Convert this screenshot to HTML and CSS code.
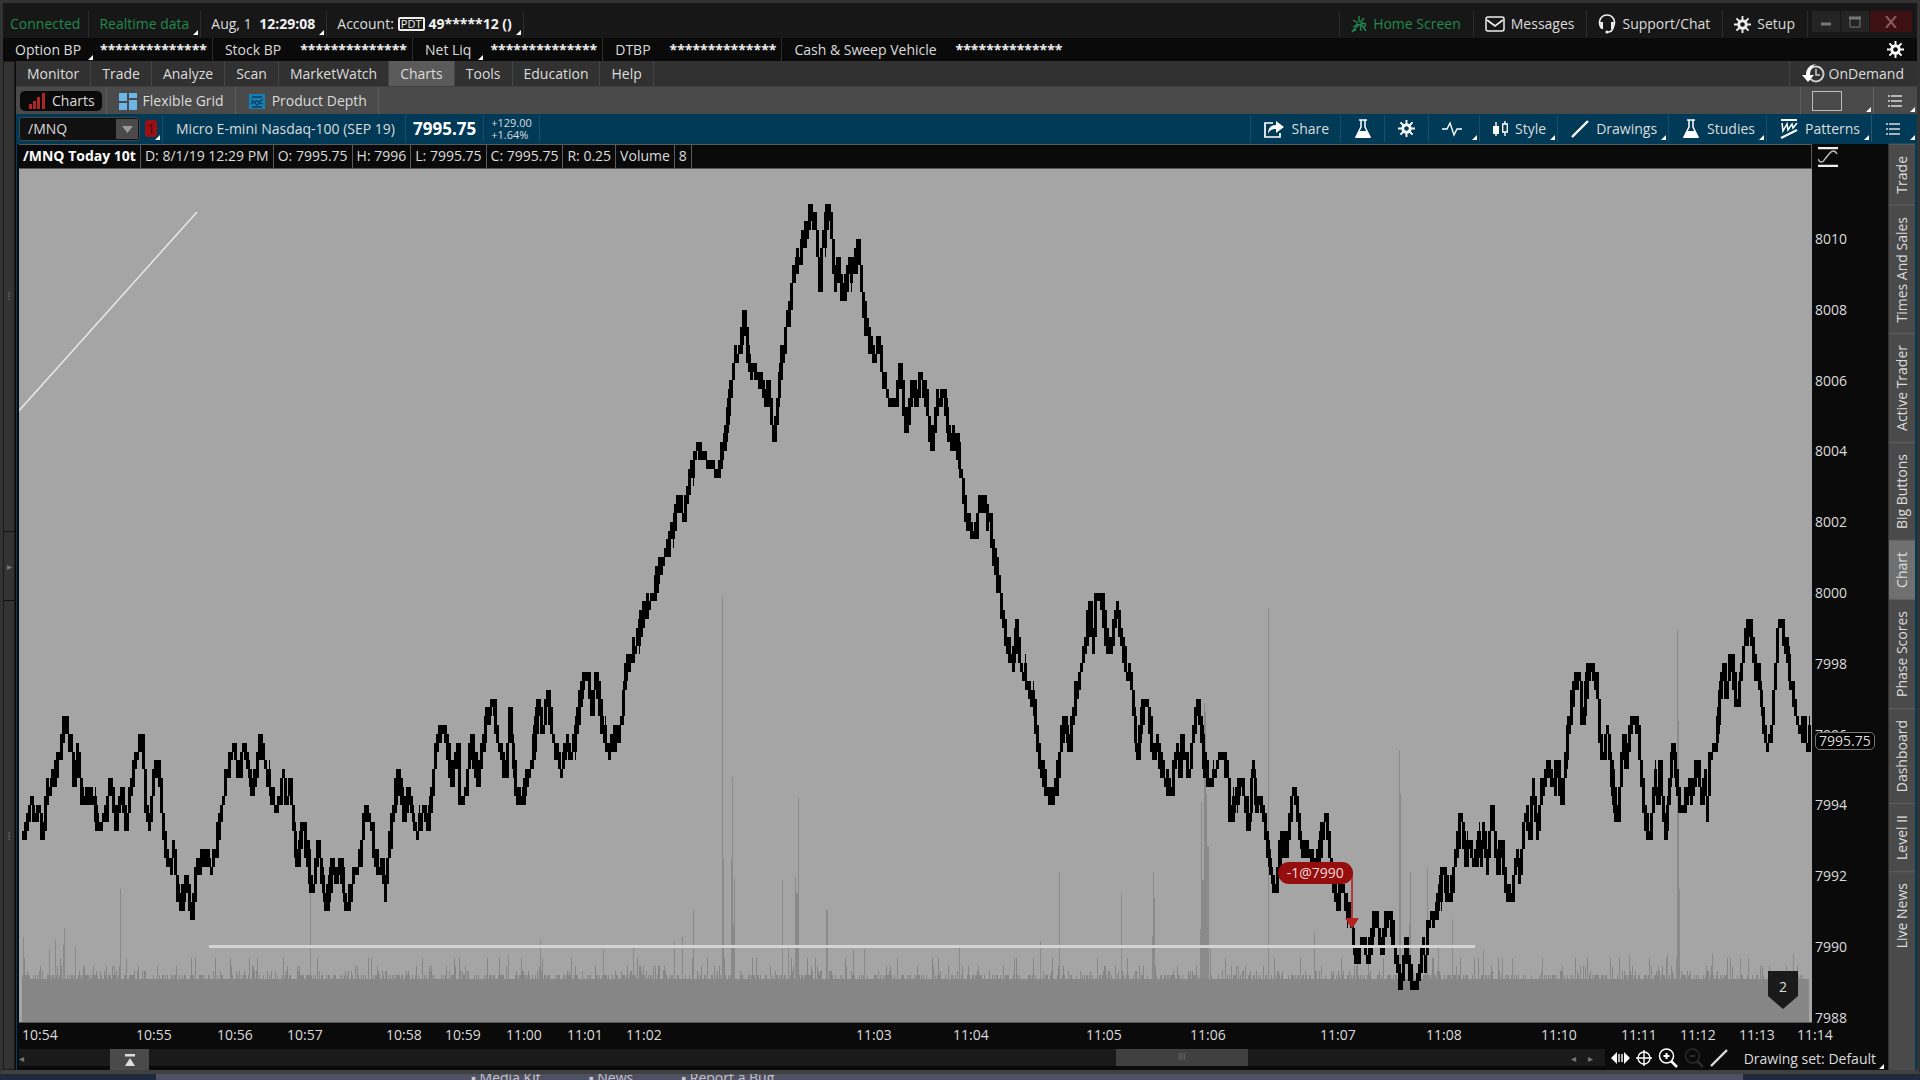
FILE: index.html
```
<!DOCTYPE html>
<html lang="en">
<head>
    <meta charset="UTF-8">
    <meta name="viewport" content="width=device-width, initial-scale=1.0">
    <title>Charts - /MNQ</title>
    <link rel="stylesheet" href="styles.css">
</head>
<body>
    <!-- shared icons -->
    <svg class="sprite" aria-hidden="true">
        <symbol id="gear" viewBox="0 0 18 18">
            <circle cx="9" cy="9" r="4" fill="none" stroke="currentColor" stroke-width="3"/>
            <path d="M9 0v4M9 14v4M0 9h4M14 9h4M2.6 2.6l3 3M12.4 12.4l3 3M2.6 15.4l3-3M12.4 5.6l3-3" stroke="currentColor" stroke-width="2"/>
        </symbol>
        <symbol id="flask" viewBox="0 0 18 20">
            <path d="M5 1h8M7 1v7L2 18h14L11 8V1" fill="none" stroke="currentColor" stroke-width="1.5"/>
            <path d="M5.5 12h7l4 7h-15z" fill="currentColor"/>
        </symbol>
        <symbol id="list" viewBox="0 0 16 14">
            <path d="M1 2h2M1 7h2M1 12h2M4 2h11M4 7h11M4 12h11" stroke="currentColor" stroke-width="1.4"/>
        </symbol>
        <symbol id="line" viewBox="0 0 18 18">
            <path d="M1 17L17 1" stroke="currentColor" stroke-width="2.4"/>
        </symbol>
    </svg>

    <div class="app">
        <header class="topbar">
            <span class="top-item green">Connected</span>
            <button class="top-item green corner">Realtime data</button>
            <button class="top-item corner">Aug, 1&nbsp; <b>12:29:08</b></button>
            <button class="top-item corner">Account: <span class="pdt">PDT</span> <b>49*****12 ()</b></button>
            <div class="spacer"></div>
            <button class="top-item right-item green">
                <svg width="16" height="18" viewBox="0 0 16 18"><path d="M8 1v6M13 3L9 8M2 5l5 3M8 9l-7 8M9 9l1 7M10 9l5 7M2 12l5-3M10 8l5 1M1 16l4-1M13 12l2-2" fill="none" stroke="currentColor" stroke-width="1.4"/></svg>
                Home Screen
            </button>
            <button class="top-item right-item">
                <svg width="20" height="16" viewBox="0 0 20 16"><rect x="1" y="1" width="18" height="14" rx="2" fill="none" stroke="currentColor" stroke-width="1.5"/><path d="M2 4l8 6 8-6" fill="none" stroke="currentColor" stroke-width="1.7"/></svg>
                Messages
            </button>
            <button class="top-item right-item">
                <svg width="18" height="20" viewBox="0 0 18 20"><path d="M3 14C-1 6 4 1 9 1s10 5 6 13q-1 4-5 4" fill="none" stroke="currentColor" stroke-width="1.6"/><path d="M2 8l3 0 0 7-2 0zM16 8l-3 0 0 7 2 0z" fill="currentColor"/><circle cx="9" cy="18" r="1.6" fill="currentColor"/></svg>
                Support/Chat
            </button>
            <button class="top-item right-item"><svg width="17" height="17"><use href="#gear"/></svg>Setup</button>
            <div class="window-buttons">
                <button aria-label="Minimize"><svg width="12" height="12"><path d="M1 8h10" stroke="#777" stroke-width="3"/></svg></button>
                <button aria-label="Maximize"><svg width="12" height="12"><path d="M1 2v9h10V2" fill="none" stroke="#777"/><path d="M0 2h12" stroke="#777" stroke-width="3"/></svg></button>
                <button class="close" aria-label="Close"><svg width="12" height="12"><path d="M1 0l10 12M11 0L1 12" stroke="#8a5a5a" stroke-width="2"/></svg></button>
            </div>
        </header>

        <div class="balances">
            <div class="balance"><span class="name corner">Option BP</span><b>**************</b></div>
            <div class="balance"><span class="name">Stock BP</span><b>**************</b></div>
            <div class="balance"><span class="name corner">Net Liq</span><b>**************</b></div>
            <div class="balance"><span class="name">DTBP</span><b>**************</b></div>
            <div class="balance"><span class="name">Cash &amp; Sweep Vehicle</span><b>**************</b></div>
            <div class="spacer"></div>
            <button class="balance-setup" aria-label="Balance settings"><svg width="17" height="17"><use href="#gear"/></svg></button>
        </div>

        <div class="workspace">
            <div class="gutter">
                <span class="grip">⁞</span>
                <button class="expand" aria-label="Expand sidebar">▸</button>
                <span class="grip">⁞</span>
            </div>
            <main class="main">
                <nav class="menu">
                    <a href="#">Monitor</a>
                    <a href="#">Trade</a>
                    <a href="#">Analyze</a>
                    <a href="#">Scan</a>
                    <a href="#">MarketWatch</a>
                    <a href="#" class="active">Charts</a>
                    <a href="#">Tools</a>
                    <a href="#">Education</a>
                    <a href="#">Help</a>
                    <div class="spacer"></div>
                    <button class="ondemand">
                        <svg width="24" height="20" viewBox="0 0 24 20"><circle cx="15" cy="10" r="7.5" fill="none" stroke="#ccc" stroke-width="2"/><path d="M15 5v6h4" fill="none" stroke="#ccc" stroke-width="1.5"/><path d="M15 0C8 1 5 5 5 11H1l6 7 6-7H9c0-5 2-9 6-11z" fill="#fff"/></svg>
                        OnDemand
                    </button>
                </nav>

                <div class="tabs">
                    <div class="tab"><button class="pill">
                        <svg width="17" height="17"><path d="M1.500 12v5M5.500 9v8M9.500 5v12M14.500 1v16" stroke="#b02525" stroke-width="3"/></svg>Charts
                    </button></div>
                    <button class="tab">
                        <svg width="18" height="18"><path d="M0 1h8v8H0zM10 1h8v5h-8zM0 11h8v7H0zM10 8h8v10h-8z" fill="#6cb5e8"/></svg>Flexible Grid
                    </button>
                    <button class="tab">
                        <svg width="18" height="18"><path d="M1 2h16v15H1z" fill="#1580b5"/><path d="M4 5h10M3 8l3 2 3-1 2 1 4-3M3 12l3-2 3 3 3-2 3 1M4 15h10" fill="none" stroke="#0d3d5c" stroke-width="1.3"/></svg>Product Depth
                    </button>
                    <div class="spacer"></div>
                    <button class="layout-btn corner" aria-label="Layout"><span></span></button>
                    <button class="list-btn corner" aria-label="Menu"><svg width="16" height="14"><use href="#list"/></svg></button>
                </div>

                <div class="symbolbar">
                    <div class="combo">
                        <input type="text" value="/MNQ" aria-label="Symbol">
                        <button aria-label="Show symbols"><svg width="11" height="7"><path d="M0 0h11L5.500 7z" fill="#999"/></svg></button>
                    </div>
                    <button class="link corner"><span>1</span></button>
                    <span class="sym-name">Micro E-mini Nasdaq-100 (SEP 19)</span>
                    <span class="last">7995.75</span>
                    <span class="change">+129.00<br>+1.64%</span>
                    <div class="spacer"></div>
                    <button class="tool">
                        <svg width="20" height="18" viewBox="0 0 20 18"><path d="M9 3H1v14h15v-4" fill="none" stroke="currentColor" stroke-width="1.7"/><path d="M12 1l8 6-8 6V9c-4 0-6 1-8 5 0-6 3-9 8-9z" fill="currentColor"/></svg>Share
                    </button>
                    <button class="tool icon-tool" aria-label="Strategy"><svg width="18" height="20"><use href="#flask"/></svg></button>
                    <button class="tool icon-tool" aria-label="Chart settings"><svg width="17" height="17"><use href="#gear"/></svg></button>
                    <button class="tool pulse-tool corner" aria-label="Events"><svg width="20" height="16" viewBox="0 0 20 16"><path d="M0 8h5l3-6 4 12 3-6h5" fill="none" stroke="currentColor" stroke-width="1.4"/></svg></button>
                    <button class="tool corner">
                        <svg width="15" height="18" viewBox="0 0 15 18"><path d="M3 2v14M12 1v3M12 12v4" stroke="currentColor" stroke-width="1.4"/><path d="M0 6h6v8H0z" fill="currentColor"/><path d="M9.700 4h4.600v8H9.700z" fill="none" stroke="currentColor" stroke-width="1.4"/></svg>Style
                    </button>
                    <button class="tool corner"><svg width="18" height="18"><use href="#line"/></svg>Drawings</button>
                    <button class="tool corner"><svg width="18" height="20"><use href="#flask"/></svg>Studies</button>
                    <button class="tool corner">
                        <svg width="18" height="20" viewBox="0 0 18 20"><path d="M1 1h16" stroke="currentColor" stroke-width="2"/><path d="M1 19L17 11" stroke="currentColor" stroke-width="2"/><path d="M2 4l1 8 4-7 1 6 4-6 1 4 4-5" fill="none" stroke="currentColor" stroke-width="1.5"/></svg>Patterns
                    </button>
                    <button class="list-btn corner" aria-label="Menu"><svg width="16" height="14"><use href="#list"/></svg></button>
                </div>

                <div class="content">
                    <section class="chart">
                        <div class="infobar">
                            <b>/MNQ Today 10t</b>
                            <span>D: 8/1/19 12:29 PM</span>
                            <span>O: 7995.75</span>
                            <span>H: 7996</span>
                            <span>L: 7995.75</span>
                            <span>C: 7995.75</span>
                            <span>R: 0.25</span>
                            <span>Volume</span>
                            <span>8</span>
                        </div>
                        <button class="scale-btn" aria-label="Scale">
                            <svg width="20" height="20" viewBox="0 0 20 20"><path d="M0 1h20M0 19h20" stroke="#eee" stroke-width="2.4"/><path d="M0 12c2 4 5 4 7 0l4-5c3-4 6-4 8 0" fill="none" stroke="#bbb" stroke-width="1.4"/></svg>
                        </button>
                        <div class="plot">
                            <svg class="plot-svg" viewBox="19 169 1793 854" preserveAspectRatio="none" shape-rendering="crispEdges">
                                <path id="volume" fill="#868686"/>
                                <path id="spikes" fill="#8a8a8a"/>
                                <path id="price"/>
                                <path d="M19 411L197 212" stroke="#e8e8e8" stroke-width="1.500" shape-rendering="auto"/>
                                <path d="M209 947.500H1475" stroke="#d4d4d4" stroke-width="3"/>
                                <path d="M1352 872v48" stroke="#b03a3a" stroke-width="2"/>
                                <path d="M1345 919h14l-7 11z" fill="#b52020" shape-rendering="auto"/>
                            </svg>
                            <span class="order">-1@7990</span>
                            <span class="event"><svg width="30" height="38"><path d="M0 0h30v25L15 38 0 25z" fill="#1a1a1a"/></svg><span>2</span></span>
                        </div>
                        <div class="price-axis" id="priceAxis"></div>
                        <div class="time-axis" id="timeAxis"></div>
                        <div class="bottombar">
                            <div class="scroll">
                                <span class="arrow">◂</span>
                                <span class="thumb">III</span>
                                <span class="arrow">◂</span>
                                <span class="arrow">▸</span>
                                <button class="drawer" aria-label="Show panel"><svg width="10" height="12"><path d="M0 1h10" stroke="#ddd" stroke-width="3"/><path d="M5 4l5 8H0z" fill="#ddd"/></svg></button>
                            </div>
                            <button aria-label="Fit width"><svg width="19" height="14" viewBox="0 0 19 14"><path d="M0 7l6-6v12zM19 7l-6-6v12z" fill="#fff"/><path d="M8 3v8M11 3v8" stroke="#fff" stroke-width="1.4"/></svg></button>
                            <button aria-label="Crosshair"><svg width="16" height="16" viewBox="0 0 16 16"><circle cx="8" cy="8" r="6" fill="none" stroke="#fff" stroke-width="1.4"/><path d="M8 0v16M0 8h16" stroke="#fff" stroke-width="1.4"/></svg></button>
                            <button aria-label="Zoom in"><svg width="20" height="20" viewBox="0 0 20 20"><circle cx="8.500" cy="8" r="7" fill="none" stroke="#fff" stroke-width="1.5"/><path d="M8.500 5v6M5.500 8h6" stroke="#fff" stroke-width="2"/><path d="M13 13l6 6" stroke="#fff" stroke-width="2.6"/></svg></button>
                            <button aria-label="Zoom out" disabled><svg width="20" height="20" viewBox="0 0 20 20"><circle cx="8.500" cy="8" r="7" fill="none" stroke="#2a2a2a" stroke-width="1.5"/><path d="M5.500 8h6" stroke="#2a2a2a" stroke-width="2"/><path d="M13 13l6 6" stroke="#2a2a2a" stroke-width="2.6"/></svg></button>
                            <button aria-label="Draw line"><svg width="18" height="18"><use href="#line"/></svg></button>
                            <button class="drawing-set corner">Drawing set: Default</button>
                        </div>
                    </section>

                    <aside class="side-tabs">
                        <button>Trade</button>
                        <button>Times And Sales</button>
                        <button>Active Trader</button>
                        <button>Big Buttons</button>
                        <button class="active">Chart</button>
                        <button>Phase Scores</button>
                        <button>Dashboard</button>
                        <button>Level II</button>
                        <button>Live News</button>
                    </aside>
                </div>
            </main>
        </div>
    </div>
    <footer class="desktop">
        <div class="behind"><span>▪ Media Kit</span><span>▪ News</span><span>▪ Report a Bug</span></div>
    </footer>

    <script src="chart.js"></script>
</body>
</html>
```

FILE: styles.css
```
* {
    box-sizing: border-box;
}
body {
    margin: 0;
    height: 100vh;
    display: flex;
    flex-direction: column;
    overflow: hidden;
    background: #0a0a0a;
    color: #dcdcdc;
    font-family: "Open Sans", "Noto Sans", sans-serif;
    font-size: 14px;
    line-height: 20px;
    white-space: nowrap;
}
button, input {
    font: inherit;
    color: inherit;
    background: none;
    border: none;
    padding: 0;
    margin: 0;
}
a {
    color: inherit;
    text-decoration: none;
}
svg {
    display: block;
    flex: none;
}
.sprite {
    position: absolute;
    width: 0;
    height: 0;
}
.spacer {
    flex: 1;
}
.green {
    color: #1f8a50;
}

/* small white triangle that marks a drop-down */
.corner {
    position: relative;
}
.corner::after {
    content: "";
    position: absolute;
    right: 2px;
    bottom: 2px;
    border-left: 5px solid transparent;
    border-bottom: 5px solid #fff;
}

.app {
    flex: 1;
    min-height: 0;
    display: flex;
    flex-direction: column;
    border: 3px solid #333;
    border-bottom: 4px solid #404040;
}

/* top bar */
.topbar {
    display: flex;
    height: 35px;
    padding: 8px 5px 1px 0;
    background: #171717;
}
.top-item {
    display: flex;
    align-items: center;
    gap: 4px;
    padding: 0 11px 0 10px;
    border-right: 1px solid #2c2c2c;
}
.top-item:first-child {
    padding: 0 8px 0 7px;
}
.top-item b {
    color: #f2f2f2;
}
.right-item {
    gap: 6px;
    padding: 0 12px 0 11px;
}
.right-item svg {
    color: #eee;
}
.right-item.green {
    border-left: 1px solid #2c2c2c;
}
.right-item.green svg {
    color: #1f8a50;
}
.pdt {
    border: 2px solid #eee;
    border-radius: 2px;
    padding: 0 1px;
    font-size: 11px;
    line-height: 10px;
    color: #eee;
}
.window-buttons {
    display: flex;
    gap: 1px;
    height: 21px;
    margin-left: 4px;
}
.window-buttons button {
    width: 28px;
    display: grid;
    place-items: center;
    background: #242424;
}
.window-buttons .close {
    width: 42px;
    background: #3d1111;
}

/* balances */
.balances {
    display: flex;
    height: 23px;
    padding-right: 13px;
}
.balance {
    display: flex;
    align-items: center;
    padding: 0 5px 0 12px;
    border-right: 1px solid #2c2c2c;
}
.balance:nth-child(5) {
    border-right: none;
}
.balance .name {
    padding-right: 19px;
}
.balance .name.corner::after {
    right: 7px;
    bottom: 0;
}
.balance b {
    color: #eee;
}
.balance-setup {
    display: grid;
    place-items: center;
    color: #fff;
}

.workspace {
    flex: 1;
    min-height: 0;
    display: flex;
    gap: 1px;
}
.gutter {
    width: 12px;
    display: flex;
    flex-direction: column;
    justify-content: center;
    gap: 225px;
    align-items: center;
    background: #333;
    border: 1px solid #1a1a1a;
    color: #777;
    font-size: 10px;
}
.expand {
    width: 100%;
    height: 70px;
    border-top: 1px solid #111;
    border-bottom: 1px solid #111;
}
.main {
    flex: 1;
    min-width: 0;
    display: flex;
    flex-direction: column;
}

/* menu */
.menu {
    display: flex;
    height: 26px;
    background: #313131;
    border-bottom: 1px solid #3e3e3e;
}
.menu a {
    padding: 3px 11px 0;
    border-right: 1px solid #444;
}
.menu a.active {
    background: #5a5a5a;
}
.ondemand {
    display: flex;
    align-items: center;
    gap: 4px;
    padding: 0 13px 0 11px;
    border-left: 1px solid #444;
}

/* sub tabs */
.tabs {
    display: flex;
    height: 27px;
    background: #4a4a4a;
}
.tab {
    display: flex;
    align-items: center;
    gap: 6px;
    padding: 0 11px 0 12px;
    border-right: 1px solid #5c5c5c;
}
.tab:first-child {
    padding: 0 4px;
}
.pill {
    display: flex;
    align-items: center;
    gap: 6px;
    padding: 0 7px 0 9px;
    background: #0a0a0a;
    border-radius: 5px;
}
.layout-btn {
    width: 73px;
    padding-left: 11px;
    border-left: 1px solid #5c5c5c;
}
.layout-btn span {
    display: block;
    width: 30px;
    height: 20px;
    border: 1px solid #bbb;
}
.list-btn {
    width: 44px;
    padding-left: 13px;
    border-left: 1px solid rgba(255, 255, 255, 0.15);
}

/* symbol bar */
.symbolbar {
    display: flex;
    align-items: stretch;
    height: 30px;
    padding: 1px 0 2px 3px;
    background: #003a57;
}
.symbolbar .list-btn {
    width: 46px;
}
.combo {
    display: flex;
    width: 121px;
    margin: 2px 0 1px;
    padding: 1px;
    background: #111;
    border: 1px solid #444;
    border-radius: 3px;
}
.combo input {
    flex: 1;
    min-width: 0;
    padding-left: 7px;
}
.combo button {
    width: 22px;
    display: grid;
    place-items: center;
    background: #4a4a4a;
}
.link {
    width: 23px;
    padding: 0 5px;
    border-right: 1px solid #17506d;
}
.link span {
    display: block;
    height: 17px;
    line-height: 17px;
    background: #9c0f12;
    border-radius: 3px;
    color: #401010;
}
.sym-name {
    padding: 4px 10px 0 13px;
    border-right: 1px solid #17506d;
}
.last {
    padding: 4px 7px 0;
    border-right: 1px solid #17506d;
    color: #fff;
    font-size: 17px;
    font-weight: bold;
}
.change {
    padding: 2px 7px 0;
    border-right: 1px solid #17506d;
    font-size: 11px;
    line-height: 12px;
}
.tool {
    display: flex;
    align-items: center;
    gap: 7px;
    padding: 0 11px 0 13px;
    border-left: 1px solid #17506d;
}
.tool svg {
    color: #fff;
}
.icon-tool {
    width: 44px;
}
.pulse-tool {
    width: 51px;
}

/* chart */
.content {
    flex: 1;
    min-height: 0;
    display: flex;
    border-left: 1px solid #00405e;
    border-right: 2px solid #003a57;
}
.chart {
    flex: 1;
    min-width: 0;
    display: grid;
    grid-template-columns: minmax(0, 1fr) 76px;
    grid-template-rows: 25px minmax(0, 1fr) 26px 21px;
    padding-left: 2px;
}
.infobar {
    display: flex;
    border: 1px solid #5a5a5a;
    border-width: 1px 1px 1px 0;
}
.infobar > * {
    padding: 1px 4px 0;
    border-right: 1px solid #5a5a5a;
}
.infobar b {
    color: #fff;
}
.scale-btn {
    padding-left: 6px;
}
.plot {
    position: relative;
    background: #a5a5a5;
    border-bottom: 1px solid #555;
}
.plot-svg {
    width: 100%;
    height: 100%;
}
.order {
    position: absolute;
    left: 70.2%;
    top: 81.3%;
    width: 75px;
    height: 22px;
    line-height: 22px;
    border-radius: 11px;
    background: #960d0d;
    color: #f0dada;
    text-align: center;
}
.event {
    position: absolute;
    right: 14px;
    bottom: 13px;
}
.event span {
    position: absolute;
    left: 0;
    right: 0;
    top: 6px;
    text-align: center;
}
.price-axis {
    position: relative;
}
.price-axis span {
    position: absolute;
    left: 3px;
    transform: translateY(-50%);
}
.price-axis .current {
    padding: 0 3px;
    height: 18px;
    line-height: 16px;
    background: #000;
    border: 1px solid #777;
    border-radius: 5px;
}
.time-axis {
    position: relative;
    grid-column: 1 / 3;
}
.time-axis span {
    position: absolute;
    top: 2px;
}
.bottombar {
    grid-column: 1 / 3;
    display: flex;
    align-items: flex-start;
    gap: 6px;
    padding-right: 4px;
}
.bottombar > button {
    height: 18px;
    display: flex;
    align-items: center;
}
.scroll {
    flex: 1;
    position: relative;
    display: flex;
    align-items: center;
    height: 17px;
    background: #1a1a1a;
    color: #777;
}
.arrow {
    width: 17px;
    font-size: 10px;
}
.thumb {
    width: 132px;
    margin-left: auto;
    margin-right: 323px;
    height: 17px;
    line-height: 16px;
    background: #404040;
    font-size: 9px;
    text-align: center;
}
.drawer {
    position: absolute;
    left: 91px;
    top: 0;
    width: 39px;
    height: 21px;
    display: grid;
    place-items: center;
    background: #4a4a4a;
}
.bottombar .drawing-set {
    height: 20px;
    padding: 0 8px 0 10px;
}
.drawing-set.corner::after {
    right: 0;
    bottom: 0;
}

/* vertical tabs on the right */
.side-tabs {
    width: 27px;
    display: flex;
    flex-direction: column;
    background: #4a4a4a;
    border-left: 1px solid #333;
}
.side-tabs button {
    writing-mode: vertical-rl;
    transform: rotate(180deg);
    padding: 11px 0;
    width: 26px;
    line-height: 26px;
    border-bottom: 1px solid #616161;
}
.side-tabs .active {
    background: #707070;
}

/* page visible below the window */
.desktop {
    height: 6px;
    overflow: hidden;
    background: #1f2a3c;
}
.behind {
    display: flex;
    gap: 48px;
    height: 6px;
    line-height: 8px;
    margin: 0 177px 0 156px;
    padding-left: 315px;
    background: #4f5163;
    color: #c4c4cc;
}
```

FILE: chart.js
```
// x position and price, in ticks of 0.25 from 7990
const prices = [
    [22,12],[31,17],[35,13.5],[39,16],[43,11.5],[46,17],[55,19.5],[61,22],[64,26],[67,24],[73,22],[74,18],[78,22],[83,15.5],[91,18],
    [98,13],[105,14],[111,19],[115,13],[122,18],[127,13],[130,18],[136,21],[142,24],[146,15],[149,13],[155,21],[160,19],[163,13],
    [165,11],[171,8.5],[173,12],[176,7.5],[181,4],[187,8],[192,3],[196,8],[204,10.5],[211,8.5],[216,11],[222,16],[229,21],[234,23],
    [238,19],[244,23],[248,20],[253,17],[260,24],[265,20],[273,16],[280,16],[283,20],[287,15.5],[290,19],[295,11],[298,9],[302,14],
    [308,10],[313,6],[318,12],[322,7],[326,4],[333,10],[336,7],[340,10],[344,6],[347,4],[353,8],[359,9],[363,13],[367,16],[373,12],
    [378,8],[382,10],[385,5],[389,11],[394,16],[399,20],[404,14],[409,18],[413,14],[418,13],[424,16],[428,13],[433,19],[439,25],
    [445,25],[452,18],[458,23],[460,16],[466,17],[471,24],[478,18],[484,24],[493,28],[498,23],[506,19],[510,27],[515,18],[522,15.5],
    [531,20],[539,28],[543,24],[547,29],[552,24],[561,19.5],[567,24],[571,21],[576,25],[584,30.5],[588,31],[592,26],[596,31],
    [601,26],[608,21.5],[618,24],[623,27],[626,32],[632,33],[639,35.5],[645,38],[652,39.5],[657,41],[661,43.5],[668,44.5],[675,49],
    [679,51],[684,48],[690,52.5],[697,57],[702,55],[712,55],[717,52.5],[722,56],[726,58],[730,62.5],[735,66.5],[740,68],[744,72],
    [749,65.5],[758,64.5],[765,61],[768,64],[774,57],[777,61],[781,66.5],[788,71],[794,76.5],[802,79],[807,81.5],[811,84],[817,80.5],
    [820,74],[822,78.5],[828,84],[832,79.5],[835,73.5],[838,78],[844,72.5],[849,77.5],[853,76],[858,80],[862,73.5],[866,69.5],
    [874,66],[879,69],[883,64],[890,61],[895,61.5],[900,66],[906,58],[913,64],[915,61],[920,65],[927,61.5],[932,56],[938,61.5],
    [944,63],[947,59],[952,57],[955,58],[962,52.5],[965,49],[974,46],[981,51],[990,47.5],[997,42],[1005,36],[1013,31],[1017,37],
    [1020,31.5],[1030,29],[1035,26],[1040,21],[1051,15.5],[1055,17.5],[1059,20.5],[1064,25.5],[1069,22],[1075,28],[1082,32],
    [1085,34.5],[1090,39],[1093,33],[1096,40],[1102,38.5],[1109,33],[1117,39],[1122,34.5],[1127,30],[1129,32],[1133,28],[1137,21],
    [1144,28],[1148,27],[1154,21],[1158,22.5],[1163,19.5],[1171,17],[1177,22.5],[1180,18.5],[1182,24],[1189,18.5],[1193,24],
    [1198,28],[1201,24],[1204,21],[1208,18],[1215,19.5],[1221,22],[1228,19],[1230,13.5],[1237,18],[1242,19],[1249,13],[1253,21],
    [1257,14.5],[1259,17],[1265,13.5],[1269,9],[1276,6],[1280,11],[1283,13],[1286,10],[1293,18],[1298,14],[1303,10],[1307,12],
    [1312,8],[1318,10],[1326,15],[1330,10],[1338,4],[1342,7],[1348,4],[1353,1],[1358,-2],[1362,1],[1368,-2],[1376,4],[1382,-1],
    [1383,2],[1389,4],[1395,-1],[1401,-5],[1406,1],[1412,-5],[1417,-5],[1423,1],[1425,-2.5],[1428,3],[1435,2.5],[1444,9],[1449,4.5],
    [1455,9.5],[1461,15],[1465,9],[1470,11.5],[1474,8.5],[1479,12],[1481,9],[1483,14],[1487,8],[1492,16],[1497,8],[1501,12],
    [1507,6.5],[1512,5],[1515,10],[1520,7.5],[1523,13],[1527,15],[1530,12],[1533,19],[1537,12],[1543,19],[1548,21],[1553,17.5],
    [1557,21],[1562,16],[1565,21],[1570,26],[1575,31],[1580,29.5],[1582,25],[1587,30],[1591,32],[1597,30],[1601,21],[1604,20.5],
    [1607,25],[1613,17.5],[1618,14],[1623,24],[1627,20],[1631,26],[1638,24.5],[1642,18],[1649,11.5],[1655,19],[1658,15.5],[1660,21],
    [1665,12],[1673,23],[1678,16.5],[1682,14.5],[1689,19],[1692,16.5],[1698,21],[1702,15.5],[1705,20],[1707,14],[1710,21.5],
    [1715,22],[1720,28],[1724,31.5],[1726,28],[1731,33],[1737,27],[1743,33],[1750,37],[1755,30.5],[1758,31.5],[1763,25.5],
    [1767,22.5],[1772,25],[1775,30.5],[1778,36],[1782,37],[1788,32],[1795,26.5],[1802,24],[1804,26],[1807,22],[1811,24]
];

// x position and top of the tall volume bars
const spikes = [
    [23,938],[49,950],[55,941],[63,946],[64,929],[75,947],[120,890],[310,880],[508,956],[540,941],[603,950],[633,946],[674,942],
    [682,938],[693,911],[722,597],[723,860],[731,860],[732,778],[733,925],[734,878],[782,881],[788,946],[795,878],[796,894],[797,894],[798,799],
    [826,911],[827,911],[853,950],[864,950],[959,947],[1040,942],[1059,873],[1121,894],[1152,937],[1153,873],[1154,899],[1200,930],
    [1201,804],[1202,881],[1203,881],[1204,704],[1205,713],[1206,795],[1207,847],[1208,847],[1210,950],[1268,609],[1314,933],
    [1399,751],[1400,795],[1409,925],[1410,873],[1427,869],[1438,947],[1452,920],[1483,950],[1502,959],[1512,959],[1542,959],[1629,955],
    [1667,955],[1676,959],[1677,631],[1678,722],[1679,890],[1712,955],[1740,959],[1748,959],[1793,955]
];

const times = [
    ["10:54", 22], ["10:55", 136], ["10:56", 217], ["10:57", 287], ["10:58", 386], ["10:59", 445], ["11:00", 506],
    ["11:01", 567], ["11:02", 626], ["11:03", 856], ["11:04", 953], ["11:05", 1086], ["11:06", 1190], ["11:07", 1320],
    ["11:08", 1426], ["11:10", 1541], ["11:11", 1621], ["11:12", 1680], ["11:13", 1739], ["11:14", 1797]
];

const tick = 8.85;
const zeroY = 947;

// repeatable random numbers
let seed = 7;
function random() {
    seed = (seed * 16807) % 2147483647;
    return seed / 2147483647;
}

function tickAt(x) {
    let i = 1;
    while (i < prices.length - 1 && prices[i][0] < x) i++;
    const [x1, t1] = prices[i - 1];
    const [x2, t2] = prices[i];
    return t1 + (t2 - t1) * (x - x1) / (x2 - x1);
}

// lowest and highest tick between two x positions
function range(from, to) {
    const values = [];
    for (let x = Math.max(22, from); x <= Math.min(1811, to); x++) values.push(tickAt(x));
    return [Math.round(Math.min(...values)), Math.round(Math.max(...values))];
}

function bar(x, width, top, bottom) {
    return `M${x} ${top}h${width}V${bottom}h${-width}z`;
}

function drawPrice() {
    let d = "";
    for (let x = 22; x < 1810; x += 2) {
        let [low, high] = range(x, x + 2);
        const [minLow, maxHigh] = range(x - 5, x + 7);
        if (high - low < 3) {
            if (random() < 0.6) low = Math.max(minLow, low - 1);
            if (random() < 0.6) high = Math.min(maxHigh, high + 1);
        }
        if (high === low) low--;
        d += bar(x, 3, zeroY - high * tick, zeroY - low * tick);
        if (random() < 0.15) {
            d += bar(x + 1, 1, zeroY - Math.min(maxHigh, high + 1) * tick, zeroY - Math.max(minLow, low - 1) * tick);
        }
    }
    document.getElementById("price").setAttribute("d", d);
}

function drawVolume() {
    let d = bar(22, 1787, 980, 1023);
    for (let x = 22; x < 1808; x += 1) {
        const r = random();
        if (r < 0.5) d += bar(x, 1, 976, 980);
        if (r < 0.17) d += bar(x, 1, 972, 980);
        if (r < 0.08) d += bar(x, 1, 967, 980);
        if (r < 0.03) d += bar(x, 1, 959, 980);
    }
    document.getElementById("volume").setAttribute("d", d);
    document.getElementById("spikes").setAttribute("d", spikes.map(([x, y]) => bar(x, 1, y, 980)).join(""));
}

function addLabel(parent, text, side, percent, className) {
    const label = document.createElement("span");
    label.textContent = text;
    label.style[side] = percent + "%";
    if (className) label.className = className;
    parent.appendChild(label);
}

function drawAxes() {
    const priceAxis = document.getElementById("priceAxis");
    for (let p = 8010; p >= 7988; p -= 2) {
        addLabel(priceAxis, p, "top", (zeroY - (p - 7990) * 4 * tick - 169) / 854 * 100);
    }
    addLabel(priceAxis, "7995.75", "top", (741 - 169) / 854 * 100, "current");

    const timeAxis = document.getElementById("timeAxis");
    times.forEach(([text, x]) => addLabel(timeAxis, text, "left", (x - 19) / 1869 * 100));
}

drawPrice();
drawVolume();
drawAxes();
```
